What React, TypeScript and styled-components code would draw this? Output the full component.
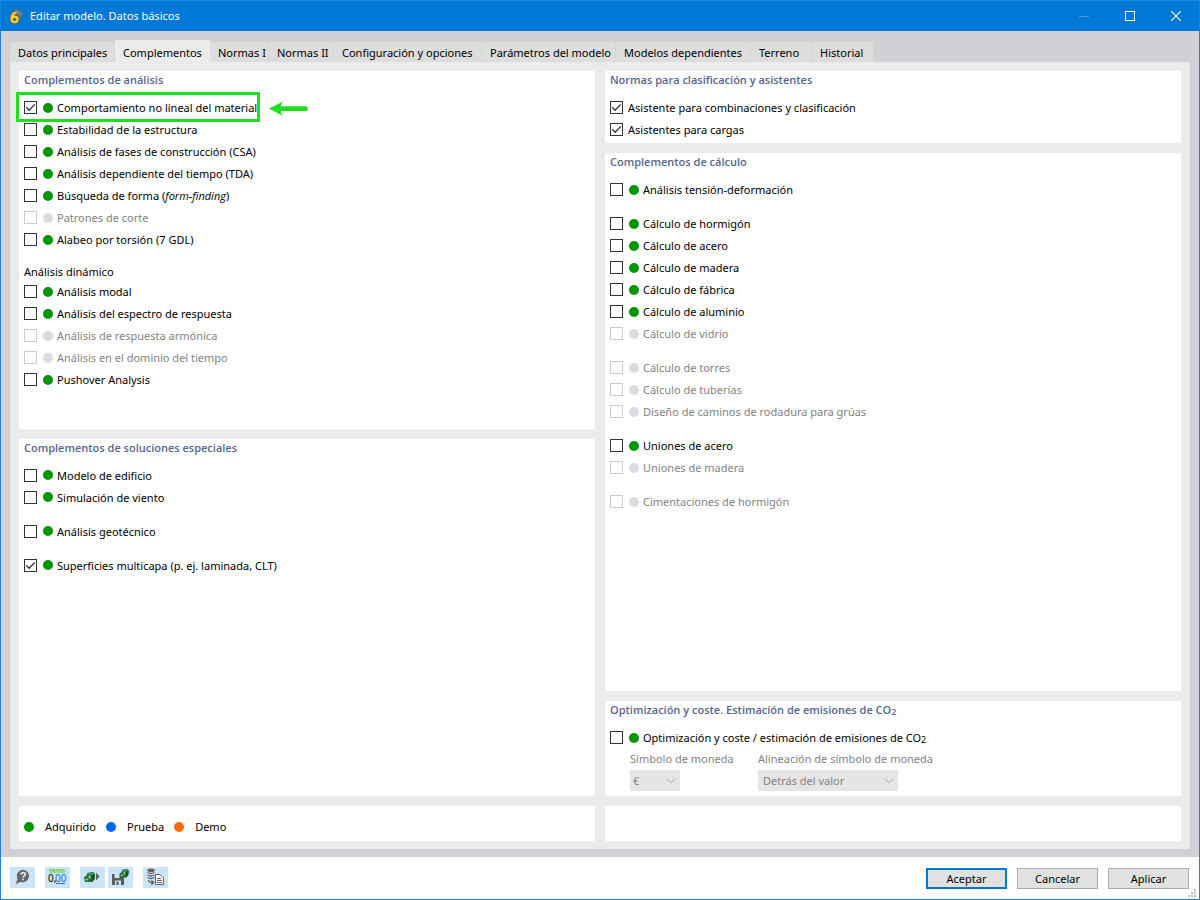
import React, { ReactNode, useId, useState } from "react";
import styled, { createGlobalStyle, css } from "styled-components";

const color = {
  accent: "#0078d7",
  frame: "#1c84da",
  shell: "#d1d0d6",
  page: "#ebebeb",
  tab: "#dddddd",
  heading: "#566690",
  green: "#009600",
  blue: "#0066ff",
  orange: "#ff6a00",
  idle: "#dcdce0",
  mutedText: "#838383",
  mark: "#1fdf1f",
};

const GlobalStyle = createGlobalStyle`
  *, *::before, *::after { box-sizing: border-box; }
  body {
    margin: 0;
    background: #fff;
    color: #000;
    font-family: "Noto Sans", "Open Sans", sans-serif;
    font-size: 11px;
    line-height: 14px;
  }
  button, select, input { font: inherit; color: inherit; margin: 0; }
`;

const Window = styled.div`
  min-height: 100vh;
  display: flex;
  flex-direction: column;
  border: 1px solid ${color.frame};
  position: relative;
`;

const TitleBar = styled.header`
  height: 30px;
  display: flex;
  align-items: center;
  padding-left: 7px;
  background: ${color.accent};
  color: #fff;
`;

const AppIcon = styled.svg`
  width: 16px;
  height: 16px;
  flex: none;
`;

const WindowTitle = styled.h1`
  margin: 0 auto 0 6px;
  font-size: 11px;
  font-weight: 400;
  line-height: 16px;
`;

const CaptionButton = styled.button`
  width: 46px;
  height: 28px;
  padding: 0;
  border: 0;
  background: none;
  display: grid;
  place-items: center;
`;

const Shell = styled.main`
  flex: 1;
  display: flex;
  flex-direction: column;
  padding: 9px 9px 8px;
  background: ${color.shell};
`;

const TabStrip = styled.div`
  display: flex;
  align-items: flex-end;
  height: 22px;
`;

const Tab = styled.button<{ $width: number; $active: boolean }>`
  width: ${(p) => p.$width}px;
  height: 20px;
  padding: 2px 0 0 8px;
  border: 0;
  border-right: 1px solid #d5d5d5;
  background: ${color.tab};
  white-space: nowrap;
  display: flex;
  align-items: center;
  ${(p) =>
    p.$active &&
    css`
      height: 22px;
      background: ${color.page};
      border-color: ${color.page};
      padding-top: 4px;
    `}
`;

const TabPage = styled.div`
  flex: 1;
  display: grid;
  grid-template-columns: 1fr 1fr;
  grid-template-rows: 1fr auto;
  gap: 10px;
  padding: 9px 9px 8px;
  background: ${color.page};
`;

const Column = styled.div`
  display: flex;
  flex-direction: column;
  gap: 10px;
`;

const PanelBox = styled.section<{ $grow?: boolean }>`
  flex: ${(p) => (p.$grow ? "1 1 0" : "none")};
  padding: 0 5px 2px;
  background: #fff;
`;

const PanelTitle = styled.h2`
  margin: 0 0 8px;
  font-family: "Open Sans", "Noto Sans", sans-serif;
  font-size: 11px;
  font-weight: 600;
  line-height: 18px;
  color: ${color.heading};
`;

const SubTitle = styled.h3`
  margin: 12px 0 0;
  font-size: 11px;
  font-weight: 400;
  line-height: 18px;
`;

const Group = styled.div`
  & + & {
    margin-top: 12px;
  }
`;

const OptionRow = styled.div`
  position: relative;
  height: 22px;
  padding-top: 4px;
`;

const OptionLabel = styled.label<{ $muted?: boolean }>`
  display: inline-flex;
  align-items: center;
  height: 13px;
  white-space: nowrap;
  color: ${(p) => (p.$muted ? color.mutedText : "#000")};
`;

const CheckWrap = styled.span<{ $gap: number }>`
  display: grid;
  width: 13px;
  height: 13px;
  flex: none;
  margin-right: ${(p) => p.$gap}px;
  > * {
    grid-area: 1 / 1;
  }
  > svg {
    visibility: hidden;
    pointer-events: none;
  }
  > input:checked + svg {
    visibility: visible;
  }
`;

const CheckInput = styled.input`
  appearance: none;
  width: 13px;
  height: 13px;
  border: 1px solid #333;
  background: #fff;
  &:disabled {
    border-color: #ccc;
  }
`;

const Dot = styled.span<{ $color: string }>`
  width: 10px;
  height: 10px;
  flex: none;
  border-radius: 50%;
  background: ${(p) => p.$color};
`;

const OptionText = styled.span<{ $gap: number }>`
  padding-left: ${(p) => p.$gap}px;
  padding-top: 1px;
`;

const Term = styled.i`
  font-family: "Open Sans", "Noto Sans", sans-serif;
`;

const Sub = styled.span`
  font-size: 9px;
  line-height: 0;
  vertical-align: -1px;
`;

const Highlight = styled.div`
  position: absolute;
  left: -8px;
  top: -5px;
  width: 244px;
  height: 30px;
  border: 3px solid ${color.mark};
  pointer-events: none;
`;

const Arrow = styled.svg`
  position: absolute;
  left: 244px;
  top: 4px;
  width: 42px;
  height: 16px;
`;

const Fields = styled.div`
  display: flex;
  gap: 78px;
  padding: 0 0 3px 20px;
  color: ${color.mutedText};
`;

const Field = styled.div<{ $width: number }>`
  width: ${(p) => p.$width}px;
  > label {
    display: block;
    margin-bottom: 1px;
    white-space: nowrap;
    line-height: 20px;
  }
`;

const SelectWrap = styled.div`
  display: grid;
  > * {
    grid-area: 1 / 1;
  }
  > svg {
    justify-self: end;
    align-self: center;
    margin-right: 4px;
    pointer-events: none;
  }
`;

const SelectBox = styled.select<{ $pad: number }>`
  appearance: none;
  width: 100%;
  height: 21px;
  padding: 0 0 0 ${(p) => p.$pad}px;
  border: 0;
  border-radius: 0;
  background: #e5e5e5;
  &:disabled {
    color: ${color.mutedText};
    opacity: 1;
  }
`;

const LegendBar = styled.div`
  display: flex;
  align-items: center;
  min-height: 35px;
  padding: 6px 5px 0;
  background: #fff;
`;

const LegendItem = styled.span`
  display: flex;
  align-items: center;
  gap: 11px;
  margin-right: 10px;
`;

const Footer = styled.footer`
  height: 42px;
  display: flex;
  align-items: center;
  padding: 0 10px 0 9px;
  background: #fff;
`;

const Tool = styled.button<{ $gap: number }>`
  width: 25px;
  height: 21px;
  margin: 0 ${(p) => p.$gap}px 2px 0;
  padding: 0;
  border: 0;
  background: #cce4f7;
  display: grid;
  place-items: center;
`;

const Actions = styled.div`
  display: flex;
  gap: 10px;
  margin-left: auto;
`;

const Action = styled.button<{ $primary?: boolean }>`
  width: 81px;
  height: 21px;
  padding: 2px 0 0;
  background: #e1e1e1;
  border: ${(p) => (p.$primary ? `2px solid ${color.accent}` : "1px solid #adadad")};
`;

const Grip = styled.svg`
  position: absolute;
  right: 2px;
  bottom: 1px;
  width: 9px;
  height: 9px;
`;

type Option = { text: ReactNode; checked?: boolean; disabled?: boolean; plain?: boolean; marked?: boolean };

function Check({ text, checked, disabled, plain, marked }: Option) {
  return (
    <OptionRow>
      <OptionLabel $muted={disabled}>
        <CheckWrap $gap={plain ? 5 : 6}>
          <CheckInput type="checkbox" defaultChecked={checked} disabled={disabled} />
          <svg width="13" height="13" viewBox="0 0 13 13" fill="none" stroke="#333" strokeWidth="1.3">
            <path d="M2.3 6.3 5.1 9.2 10.8 3.4" />
          </svg>
        </CheckWrap>
        {!plain && <Dot $color={disabled ? color.idle : color.green} />}
        <OptionText $gap={plain ? 0 : 4}>{text}</OptionText>
      </OptionLabel>
      {marked && (
        <>
          <Highlight />
          <Arrow viewBox="0 0 42 16" aria-hidden="true">
            <path d="M1 7.500 15 0.500Q12.500 3.500 12.800 5.300H37.500a2.400 2.400 0 0 1 0 4.800H12.800Q12.500 12 15 15Z" fill={color.mark} />
          </Arrow>
        </>
      )}
    </OptionRow>
  );
}

function Options({ items }: { items: Option[] }) {
  return (
    <Group>
      {items.map((item, i) => (
        <Check key={i} {...item} />
      ))}
    </Group>
  );
}

function Panel({ title, grow, children }: { title: ReactNode; grow?: boolean; children: ReactNode }) {
  return (
    <PanelBox $grow={grow}>
      <PanelTitle>{title}</PanelTitle>
      {children}
    </PanelBox>
  );
}

function Dropdown({ label, value, width, pad }: { label: string; value: string; width: number; pad: number }) {
  const id = useId();
  return (
    <Field $width={width}>
      <label htmlFor={id}>{label}</label>
      <SelectWrap>
        <SelectBox id={id} disabled $pad={pad} defaultValue={value}>
          <option>{value}</option>
        </SelectBox>
        <svg width="10" height="6" viewBox="0 0 10 6" fill="none" stroke="#ababab">
          <path d="M1 .8 5 4.800 9 .8" />
        </svg>
      </SelectWrap>
    </Field>
  );
}

const tabs: [string, number][] = [
  ["Datos principales", 105],
  ["Complementos", 95],
  ["Normas I", 59],
  ["Normas II", 65],
  ["Configuración y opciones", 148],
  ["Parámetros del modelo", 134],
  ["Modelos dependientes", 135],
  ["Terreno", 61],
  ["Historial", 62],
];

const analysis: Option[] = [
  { text: "Comportamiento no lineal del material", checked: true, marked: true },
  { text: "Estabilidad de la estructura" },
  { text: "Análisis de fases de construcción (CSA)" },
  { text: "Análisis dependiente del tiempo (TDA)" },
  { text: <>Búsqueda de forma (<Term>form-finding</Term>)</> },
  { text: "Patrones de corte", disabled: true },
  { text: "Alabeo por torsión (7 GDL)" },
];

const dynamic: Option[] = [
  { text: "Análisis modal" },
  { text: "Análisis del espectro de respuesta" },
  { text: "Análisis de respuesta armónica", disabled: true },
  { text: "Análisis en el dominio del tiempo", disabled: true },
  { text: "Pushover Analysis" },
];

const special: Option[][] = [
  [{ text: "Modelo de edificio" }, { text: "Simulación de viento" }],
  [{ text: "Análisis geotécnico" }],
  [{ text: "Superficies multicapa (p. ej. laminada, CLT)", checked: true }],
];

const design: Option[][] = [
  [{ text: "Análisis tensión-deformación" }],
  [
    { text: "Cálculo de hormigón" },
    { text: "Cálculo de acero" },
    { text: "Cálculo de madera" },
    { text: "Cálculo de fábrica" },
    { text: "Cálculo de aluminio" },
    { text: "Cálculo de vidrio", disabled: true },
  ],
  [
    { text: "Cálculo de torres", disabled: true },
    { text: "Cálculo de tuberías", disabled: true },
    { text: "Diseño de caminos de rodadura para grúas", disabled: true },
  ],
  [{ text: "Uniones de acero" }, { text: "Uniones de madera", disabled: true }],
  [{ text: "Cimentaciones de hormigón", disabled: true }],
];

function Cube({ x, y, scale = 1 }: { x: number; y: number; scale?: number }) {
  return (
    <g transform={`translate(${x} ${y}) scale(${scale})`}>
      <path d="M0 5.500 2.500 4 3.500 1 10 0 11.500 2 11 7.500 8.500 10.500 1 10.500Z" fill="#1f6d3a" />
      <path d="M3.500 1 10 0 11.500 2 8.500 3.500 3 3.200Z" fill="#3f9558" />
      <path d="M8.500 3.500 11.500 2 11 7.500 8.500 10.500Z" fill="#155029" />
      <path d="M1.500 7h3v1.800h-3z" fill="#8dc79b" />
      <path d="M4.500 4.500 7 4.200v2L5.500 7Z" fill="#a9d8b4" />
    </g>
  );
}

function HelpIcon() {
  return (
    <svg width="25" height="21" viewBox="0 0 25 21">
      <path d="M13 2.800a6.200 6.200 0 1 1-2.600 11.900L5.500 17.300 7.600 12A6.200 6.200 0 0 1 13 2.800Z" fill="#666" />
      <path d="M10.900 7.500Q11.200 5.600 13.200 5.600 15.400 5.700 15.400 7.300C15.400 8.800 13.200 8.700 13.100 10.500M13.100 11.600v1.700" fill="none" stroke="#d8e9f7" strokeWidth="1.700" />
    </svg>
  );
}

const Digits = styled.text`
  font: 400 10px "Noto Sans", sans-serif;
`;

function UnitsIcon() {
  return (
    <svg width="25" height="21" viewBox="0 0 25 21">
      <rect x="4" y="2" width="16" height="4" fill="#8fdc85" />
      <path d="M5.500 2v1M8.500 2v2M11.500 2v1M14.500 2v2M17.500 2v1" stroke="#6fbf66" />
      <Digits x="3" y="15" fill="#000">0,</Digits>
      <Digits x="10" y="15" fill="#2f6ae0">00</Digits>
      <path d="M11 16.500h9" stroke="#2f6ae0" />
    </svg>
  );
}

function CubeNextIcon() {
  return (
    <svg width="25" height="21" viewBox="0 0 25 21">
      <Cube x={4} y={5} scale={0.95} />
      <path d="M16 5.500 19.500 9.500 16 13.500Z" fill="#606060" />
    </svg>
  );
}

function SaveCubeIcon() {
  return (
    <svg width="25" height="21" viewBox="0 0 25 21">
      <path d="M4 7h10l2 2v9H4Z" fill="#5c5c5c" />
      <path d="M6.500 7h5v4h-5zM7 13.500h6v4.500H7z" fill="#cce4f7" />
      <path d="M8.500 14.500h2V18h-2z" fill="#5c5c5c" />
      <Cube x={11.5} y={2} scale={0.8} />
    </svg>
  );
}

function DatabaseReportIcon() {
  return (
    <svg width="25" height="21" viewBox="0 0 25 21">
      <g fill="none" stroke="#626262" strokeWidth="1.300">
        <ellipse cx="8" cy="3.300" rx="3.200" ry="1.100" fill="#626262" />
        <path d="M4.500 5.500q3.500 2 7 0M4.500 8q3.500 2 7 0M4.500 10.500q3.500 2 7 0" />
        <path d="M5.500 13q0 2.800 4.500 2.500M8.300 13.200l2.300 2.300-2.300 2.300" />
        <path d="M12.500 7.500h4.500l3.500 3.500v6.500h-8Z" fill="#fff" strokeWidth="1" />
        <path d="M14 11.500h4M14 13.500h5M14 15.500h5" strokeWidth="1" />
      </g>
    </svg>
  );
}

function AppLogo() {
  const six = "M8.700 4.500C5.500 5 3.600 7.600 3.600 10.800c0 2 1.200 3.400 3 3.400s3-1.200 3-2.900-1.200-2.600-2.700-2.600c-1 0-2.200.5-3 1.500";
  return (
    <AppIcon viewBox="0 0 16 16" aria-hidden="true">
      <path d="M3 6Q4 1 9 .5 13.500 2 16 7.500L12 11 6 8Z" fill="#41617f" />
      <path d="M4 4.500Q9 2 14 4.500M6 2q5 1 8 6M9 .8q1 4 3.500 9M10 7q3-2 5-1" stroke="#8ba0b0" strokeWidth=".7" fill="none" />
      <path d={six} fill="none" stroke="#7d5d25" strokeWidth="3.400" />
      <path d={six} fill="none" stroke="#ffd22e" strokeWidth="2.200" />
    </AppIcon>
  );
}

export default function App() {
  const [active, setActive] = useState(1);
  return (
    <Window>
      <GlobalStyle />
      <TitleBar>
        <AppLogo />
        <WindowTitle>Editar modelo. Datos básicos</WindowTitle>
        <CaptionButton aria-label="Minimizar" disabled>
          <svg width="10" height="10"><path d="M0 5.500h10" stroke="#4da1e3" /></svg>
        </CaptionButton>
        <CaptionButton aria-label="Maximizar">
          <svg width="10" height="10"><rect x=".5" y=".5" width="9" height="9" fill="none" stroke="#fff" /></svg>
        </CaptionButton>
        <CaptionButton aria-label="Cerrar">
          <svg width="10" height="10"><path d="M0 0 10 10M10 0 0 10" stroke="#fff" strokeWidth="1.200" /></svg>
        </CaptionButton>
      </TitleBar>

      <Shell>
        <TabStrip role="tablist">
          {tabs.map(([name, width], i) => (
            <Tab key={name} role="tab" aria-selected={i === active} $width={width} $active={i === active} onClick={() => setActive(i)}>
              {name}
            </Tab>
          ))}
        </TabStrip>
        <TabPage role="tabpanel">
          <Column>
            <Panel title="Complementos de análisis" grow>
              <Options items={analysis} />
              <SubTitle>Análisis dinámico</SubTitle>
              <Options items={dynamic} />
            </Panel>
            <Panel title="Complementos de soluciones especiales" grow>
              {special.map((items, i) => (
                <Options key={i} items={items} />
              ))}
            </Panel>
          </Column>
          <Column>
            <Panel title="Normas para clasificación y asistentes">
              <Options
                items={[
                  { text: "Asistente para combinaciones y clasificación", checked: true, plain: true },
                  { text: "Asistentes para cargas", checked: true, plain: true },
                ]}
              />
            </Panel>
            <Panel title="Complementos de cálculo" grow>
              {design.map((items, i) => (
                <Options key={i} items={items} />
              ))}
            </Panel>
            <Panel title={<>Optimización y coste. Estimación de emisiones de CO<Sub>2</Sub></>}>
              <Options items={[{ text: <>Optimización y coste / estimación de emisiones de CO<Sub>2</Sub></> }]} />
              <Fields>
                <Dropdown label="Símbolo de moneda" value="€" width={50} pad={3} />
                <Dropdown label="Alineación de símbolo de moneda" value="Detrás del valor" width={140} pad={5} />
              </Fields>
            </Panel>
          </Column>
          <LegendBar>
            <LegendItem><Dot $color={color.green} />Adquirido</LegendItem>
            <LegendItem><Dot $color={color.blue} />Prueba</LegendItem>
            <LegendItem><Dot $color={color.orange} />Demo</LegendItem>
          </LegendBar>
          <LegendBar />
        </TabPage>
      </Shell>

      <Footer>
        <Tool $gap={10} aria-label="Ayuda"><HelpIcon /></Tool>
        <Tool $gap={10} aria-label="Unidades"><UnitsIcon /></Tool>
        <Tool $gap={3} aria-label="Cargar modelo"><CubeNextIcon /></Tool>
        <Tool $gap={10} aria-label="Guardar modelo"><SaveCubeIcon /></Tool>
        <Tool $gap={0} aria-label="Exportar datos"><DatabaseReportIcon /></Tool>
        <Actions>
          <Action $primary>Aceptar</Action>
          <Action>Cancelar</Action>
          <Action>Aplicar</Action>
        </Actions>
      </Footer>
      <Grip viewBox="0 0 9 9" fill="#bfbfbf" aria-hidden="true">
        <path d="M6 0h2v2H6zM3 3h2v2H3zM6 3h2v2H6zM0 6h2v2H0zM3 6h2v2H3zM6 6h2v2H6z" />
      </Grip>
    </Window>
  );
}
